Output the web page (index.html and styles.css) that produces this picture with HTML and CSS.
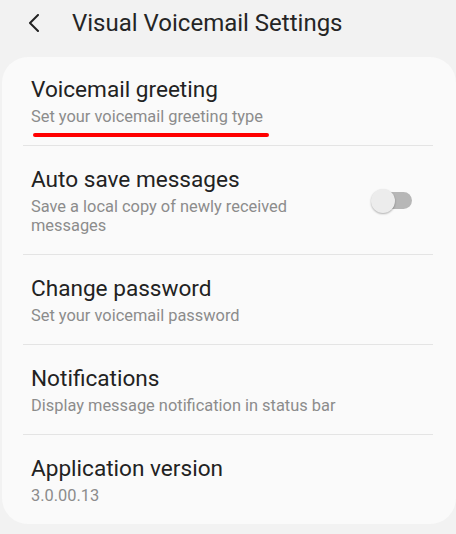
FILE: index.html
```html
<!DOCTYPE html>
<html lang="en">
<head>
    <meta charset="UTF-8">
    <meta name="viewport" content="width=device-width, initial-scale=1.0">
    <title>Visual Voicemail Settings</title>
    <link rel="stylesheet" href="styles.css">
</head>
<body>
    <div class="header">
        <svg class="back" width="12" height="18" viewBox="0 0 12 18">
            <path d="M10 1 L2 9 L10 17" fill="none" stroke="#222" stroke-width="2" stroke-linecap="round" stroke-linejoin="round"/>
        </svg>
        <h1>Visual Voicemail Settings</h1>
    </div>
    <div class="card">
        <div class="row">
            <div class="text">
                <div class="title">Voicemail greeting</div>
                <div class="sub">Set your voicemail greeting type</div>
            </div>
            <!-- annotation mark -->
            <div class="mark"></div>
        </div>
        <div class="row">
            <div class="text">
                <div class="title">Auto save messages</div>
                <div class="sub">Save a local copy of newly received messages</div>
            </div>
            <div class="switch">
                <div class="track"></div>
                <div class="thumb"></div>
            </div>
        </div>
        <div class="row">
            <div class="text">
                <div class="title">Change password</div>
                <div class="sub">Set your voicemail password</div>
            </div>
        </div>
        <div class="row">
            <div class="text">
                <div class="title">Notifications</div>
                <div class="sub">Display message notification in status bar</div>
            </div>
        </div>
        <div class="row">
            <div class="text">
                <div class="title">Application version</div>
                <div class="sub">3.0.00.13</div>
            </div>
        </div>
    </div>
</body>
</html>
```

FILE: styles.css
```css
body {
    margin: 0;
    padding: 0;
    background-color: #f2f2f2;
    font-family: Roboto, "Noto Sans", sans-serif;
    color: #222;
    width: 456px;
    height: 534px;
    overflow: hidden;
}
.header {
    display: flex;
    align-items: center;
    height: 45px;
    padding-left: 28px;
}
.back {
    margin-right: 32px;
}
.header h1 {
    margin: 0;
    font-size: 24px;
    font-weight: 400;
    color: #252525;
}
.card {
    margin: 12px 0 0 2px;
    background-color: #fafafa;
    border-radius: 26px;
    padding: 0 23px 0 21px;
}
.row {
    position: relative;
    display: flex;
    align-items: center;
    padding: 20px 0 19px 8px;
    border-top: 1px solid #e4e4e4;
}
.row:first-child {
    border-top: none;
    padding-top: 19px;
}
.text {
    flex: 1;
}
.title {
    font-size: 22.6px;
    line-height: 28px;
    color: #222;
}
.sub {
    font-size: 16.4px;
    line-height: 19px;
    color: #8c8c8c;
    margin-top: 3px;
    padding-right: 36px;
}
.mark {
    position: absolute;
    left: 10px;
    top: 76px;
    width: 236px;
    height: 4px;
    background-color: #f00;
    border-radius: 2px;
}
.switch {
    position: relative;
    width: 41px;
    height: 26px;
    margin-right: 21px;
}
.track {
    position: absolute;
    left: 12px;
    top: 4.5px;
    width: 29px;
    height: 17px;
    border-radius: 9px;
    background-color: #b7b7b7;
}
.thumb {
    position: absolute;
    left: 0;
    top: 1px;
    width: 24px;
    height: 24px;
    border-radius: 50%;
    background-color: #ececec;
    box-shadow: 0 1px 2px rgba(0, 0, 0, 0.3);
}
```
